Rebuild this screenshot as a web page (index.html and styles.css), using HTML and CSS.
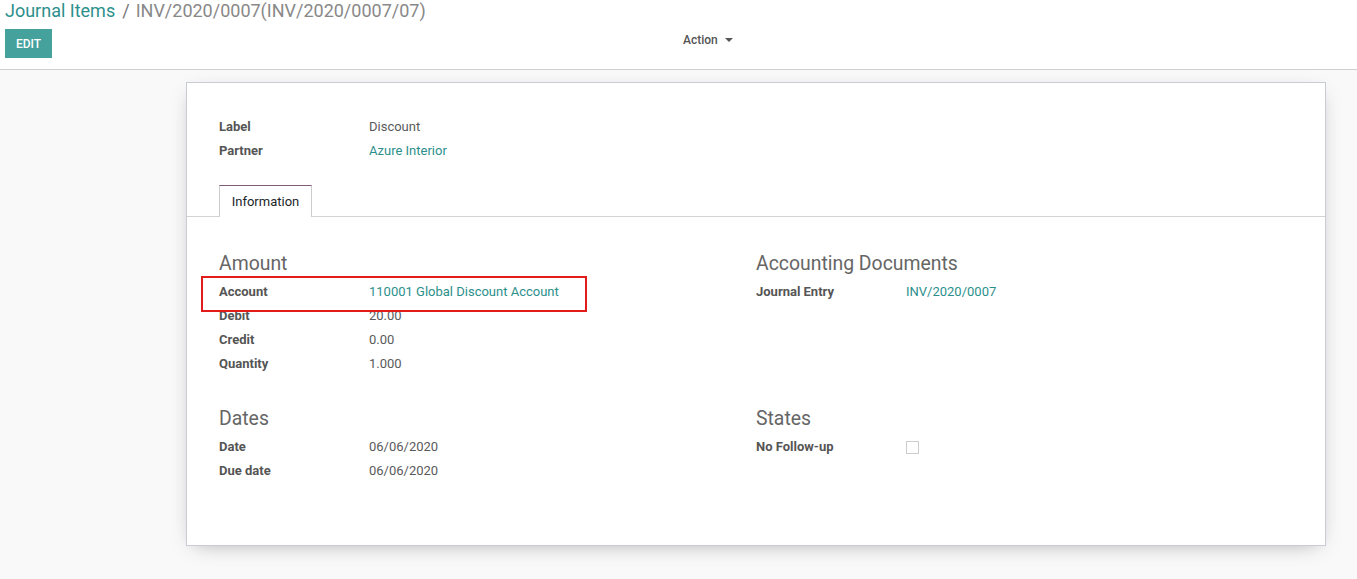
FILE: index.html
```html
<!DOCTYPE html>
<html>
<head>
<meta charset="utf-8">
<link rel="stylesheet" href="styles.css">
</head>
<body>
<div class="cp">
  <div class="crumbs"><span class="crumb-link">Journal Items</span><span class="sep">/</span><span class="crumb-cur">INV/2020/0007(INV/2020/0007/07)</span></div>
  <div class="cp-bottom">
    <div class="cp-left"><button class="btn-edit">EDIT</button></div>
    <div class="cp-right"><span class="action">Action <span class="caret"></span></span></div>
  </div>
</div>
<div class="content">
  <div class="sheet">
    <div class="top-group">
      <div class="row"><span class="lbl">Label</span><span class="val">Discount</span></div>
      <div class="row"><span class="lbl">Partner</span><span class="val link">Azure Interior</span></div>
    </div>
    <div class="tabs"><div class="tab">Information</div></div>
    <div class="groups">
      <div class="group">
        <div class="gh">Amount</div>
        <div class="row highlight"><span class="lbl">Account</span><span class="val link">110001 Global Discount Account</span></div>
        <div class="row"><span class="lbl">Debit</span><span class="val">20.00</span></div>
        <div class="row"><span class="lbl">Credit</span><span class="val">0.00</span></div>
        <div class="row"><span class="lbl">Quantity</span><span class="val">1.000</span></div>
      </div>
      <div class="group">
        <div class="gh">Accounting Documents</div>
        <div class="row"><span class="lbl">Journal Entry</span><span class="val link">INV/2020/0007</span></div>
      </div>
      <div class="group">
        <div class="gh">Dates</div>
        <div class="row"><span class="lbl">Date</span><span class="val">06/06/2020</span></div>
        <div class="row"><span class="lbl">Due date</span><span class="val">06/06/2020</span></div>
      </div>
      <div class="group">
        <div class="gh">States</div>
        <div class="row"><span class="lbl">No Follow-up</span><span class="val"><span class="check"></span></span></div>
      </div>
    </div>
  </div>
</div>
</body>
</html>
```

FILE: styles.css
```css
* { box-sizing: border-box; }
html, body { margin: 0; padding: 0; }
body {
  font-family: Roboto, "Noto Sans", sans-serif;
  font-size: 13px;
  color: #4c4c4c;
  background: #f9f9f9;
  width: 1357px;
  height: 579px;
  overflow: hidden;
}
.cp {
  background: #fff;
  height: 70px;
  border-bottom: 1px solid #cfcfcf;
  padding: 0 0 0 5px;
}
.crumbs {
  font-size: 18px;
  line-height: 22px;
  height: 22px;
  white-space: nowrap;
}
.crumb-link { color: #2c8f8c; }
.sep { color: #777; margin: 0 6px 0 7px; }
.crumb-cur { color: #888; }
.cp-bottom {
  display: grid;
  grid-template-columns: 673px 1fr;
  margin-top: 7px;
}
.btn-edit {
  background: #45a19c;
  color: #fff;
  border: none;
  font-family: Roboto, sans-serif;
  font-size: 12px;
  font-weight: 500;
  width: 47px;
  height: 29px;
  padding: 0;
  display: block;
}
.action {
  display: inline-flex;
  align-items: center;
  margin-left: 5px;
  margin-top: 3px;
  font-size: 12px;
  font-weight: 500;
  color: #555;
  line-height: 16px;
}
.caret {
  display: inline-block;
  width: 0; height: 0;
  border-left: 4px solid transparent;
  border-right: 4px solid transparent;
  border-top: 4px solid #555;
  margin-left: 7px;
}
.content {
  padding: 12px 31px 0 186px;
}
.sheet {
  background: #fff;
  border: 1px solid #c9ccd2;
  box-shadow: 0 5px 20px -8px rgba(0,0,0,0.35);
  width: 1140px;
  height: 464px;
  padding: 31px 32px 0 32px;
}
.row {
  display: flex;
  height: 24px;
  align-items: center;
  line-height: 18px;
  padding-top: 2px;
}
.lbl {
  width: 150px;
  flex: none;
  font-weight: bold;
  color: #555;
}
.val { color: #5a5a5a; }
.link { color: #2c8f8c; }
.tabs {
  margin: 23px -32px 0 -32px;
  padding-left: 32px;
  border-bottom: 1px solid #d3d3d3;
  height: 32px;
  display: flex;
}
.tab {
  border: 1px solid #ccc;
  border-top-color: #7c5b7d;
  border-bottom: none;
  background: #fff;
  height: 32px;
  width: 93px;
  padding-top: 8px;
  text-align: center;
  color: #212529;
  margin-bottom: -1px;
}
.groups {
  display: grid;
  grid-template-columns: 537px 537px;
  row-gap: 30px;
  padding-top: 33px;
}
.gh {
  font-size: 19.4px;
  line-height: 24px;
  height: 24px;
  padding-top: 2px;
  box-sizing: content-box;
  color: #666;
  margin-bottom: 3px;
}
.highlight { position: relative; }
.highlight::after {
  content: "";
  position: absolute;
  left: -18px;
  top: -3px;
  width: 382px;
  height: 32px;
  border: 2px solid #e31b1b;
}
.check {
  display: inline-block;
  width: 13px;
  height: 13px;
  border: 1px solid #ccc;
  vertical-align: middle;
}
```
